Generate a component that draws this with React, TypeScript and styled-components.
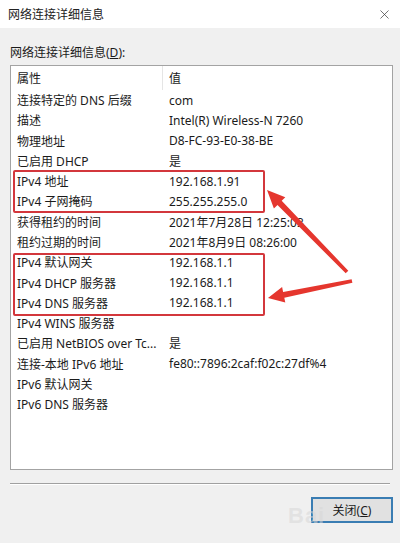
import React from "react";
import styled, { createGlobalStyle } from "styled-components";
import { X } from "lucide-react";

const GlobalStyle = createGlobalStyle`
  html, body {
    margin: 0;
    padding: 0;
    background: #f0f0f0;
  }
  * {
    box-sizing: border-box;
  }
`;

const FONT = `"Noto Sans", "Noto Sans CJK SC", sans-serif`;

const Window = styled.div`
  position: relative;
  width: 400px;
  height: 543px;
  background: #f0f0f0;
  font-family: ${FONT};
  font-size: 12px;
  color: #1b1b1b;
  overflow: hidden;
`;

const TitleBar = styled.div`
  height: 28px;
  background: #ffffff;
  display: flex;
  align-items: center;
  justify-content: space-between;
  padding: 0 4px 0 8px;
`;

const Title = styled.span`
  font-size: 12px;
  color: #222;
`;

const CloseIcon = styled.div`
  width: 24px;
  display: flex;
  justify-content: center;
  color: #333;
`;

const Body = styled.div`
  padding: 16px 7px 0 10px;
`;

const Label = styled.div`
  height: 17px;
  line-height: 17px;
  margin-bottom: 4px;
`;

const Key = styled.span`
  text-decoration: underline;
`;

const ListBox = styled.div`
  position: relative;
  height: 405px;
  background: #ffffff;
  border: 1px solid #a3a3a3;
`;

const HeaderRow = styled.div`
  display: grid;
  grid-template-columns: 152px 1fr;
  height: 24px;
  align-items: stretch;
`;

const HeaderCell = styled.div<{ $divider?: boolean }>`
  display: flex;
  align-items: center;
  padding-left: 6px;
  border-right: ${(p) => (p.$divider ? "1px solid #e5e5e5" : "none")};
`;

const Row = styled.div`
  display: grid;
  grid-template-columns: 152px 1fr;
  height: 20.27px;
  align-items: center;
`;

const NameCell = styled.div`
  padding: 0 2px 0 6px;
  white-space: nowrap;
`;

const ValueCell = styled.div`
  padding-left: 6px;
  white-space: nowrap;
`;

const Highlight = styled.div<{ $top: number; $height: number }>`
  position: absolute;
  left: 2px;
  top: ${(p) => p.$top}px;
  width: 252px;
  height: ${(p) => p.$height}px;
  border: 2px solid #d3373c;
  border-radius: 2px;
  pointer-events: none;
`;

const Separator = styled.div`
  margin: 13px 3px 0 0;
  height: 2px;
  border-top: 1px solid #a0a0a0;
  border-bottom: 1px solid #ffffff;
`;

const Footer = styled.div`
  position: relative;
  display: flex;
  justify-content: flex-end;
  margin-top: 12px;
`;

const Button = styled.button`
  width: 82px;
  height: 26px;
  background: #e1e1e1;
  border: 2px solid #3a7db3;
  font-family: ${FONT};
  font-size: 12px;
  color: #1b1b1b;
  padding: 0;
`;

const Watermark = styled.div`
  position: absolute;
  left: 278px;
  top: 6px;
  font-family: "Liberation Sans", sans-serif;
  font-size: 22px;
  font-weight: bold;
  color: rgba(215, 215, 215, 0.55);
  letter-spacing: 1px;
  pointer-events: none;
`;

const Arrows = styled.svg`
  position: absolute;
  left: 0;
  top: 0;
  pointer-events: none;
`;

const rows: [string, string][] = [
  ["连接特定的 DNS 后缀", "com"],
  ["描述", "Intel(R) Wireless-N 7260"],
  ["物理地址", "D8-FC-93-E0-38-BE"],
  ["已启用 DHCP", "是"],
  ["IPv4 地址", "192.168.1.91"],
  ["IPv4 子网掩码", "255.255.255.0"],
  ["获得租约的时间", "2021年7月28日 12:25:03"],
  ["租约过期的时间", "2021年8月9日 08:26:00"],
  ["IPv4 默认网关", "192.168.1.1"],
  ["IPv4 DHCP 服务器", "192.168.1.1"],
  ["IPv4 DNS 服务器", "192.168.1.1"],
  ["IPv4 WINS 服务器", ""],
  ["已启用 NetBIOS over Tc...", "是"],
  ["连接-本地 IPv6 地址", "fe80::7896:2caf:f02c:27df%4"],
  ["IPv6 默认网关", ""],
  ["IPv6 DNS 服务器", ""],
];

export default function App() {
  return (
    <Window>
      <GlobalStyle />
      <TitleBar>
        <Title>网络连接详细信息</Title>
        <CloseIcon>
          <X size={15} strokeWidth={1.1} />
        </CloseIcon>
      </TitleBar>
      <Body>
        <Label>
          网络连接详细信息(<Key>D</Key>):
        </Label>
        <ListBox>
          <HeaderRow>
            <HeaderCell $divider>属性</HeaderCell>
            <HeaderCell>值</HeaderCell>
          </HeaderRow>
          {rows.map(([name, value]) => (
            <Row key={name}>
              <NameCell>{name}</NameCell>
              <ValueCell>{value}</ValueCell>
            </Row>
          ))}
          <Highlight $top={104} $height={43} />
          <Highlight $top={187} $height={63} />
        </ListBox>
        <Separator />
        <Footer>
          <Watermark>Bai</Watermark>
          <Button>
            关闭(<Key>C</Key>)
          </Button>
        </Footer>
      </Body>
      <Arrows width="400" height="543" viewBox="0 0 400 543">
        <polygon
          fill="#e5362e"
          points="267,190 285.3,197.3 281.7,200.8 348.3,270.7 345.7,273.3 277.5,205 273.9,208.5"
        />
        <polygon
          fill="#e5362e"
          points="268,298 282.1,287 283.1,291.9 351.6,279.2 352.4,282.8 284.3,297.7 285.3,302.6"
        />
      </Arrows>
    </Window>
  );
}
